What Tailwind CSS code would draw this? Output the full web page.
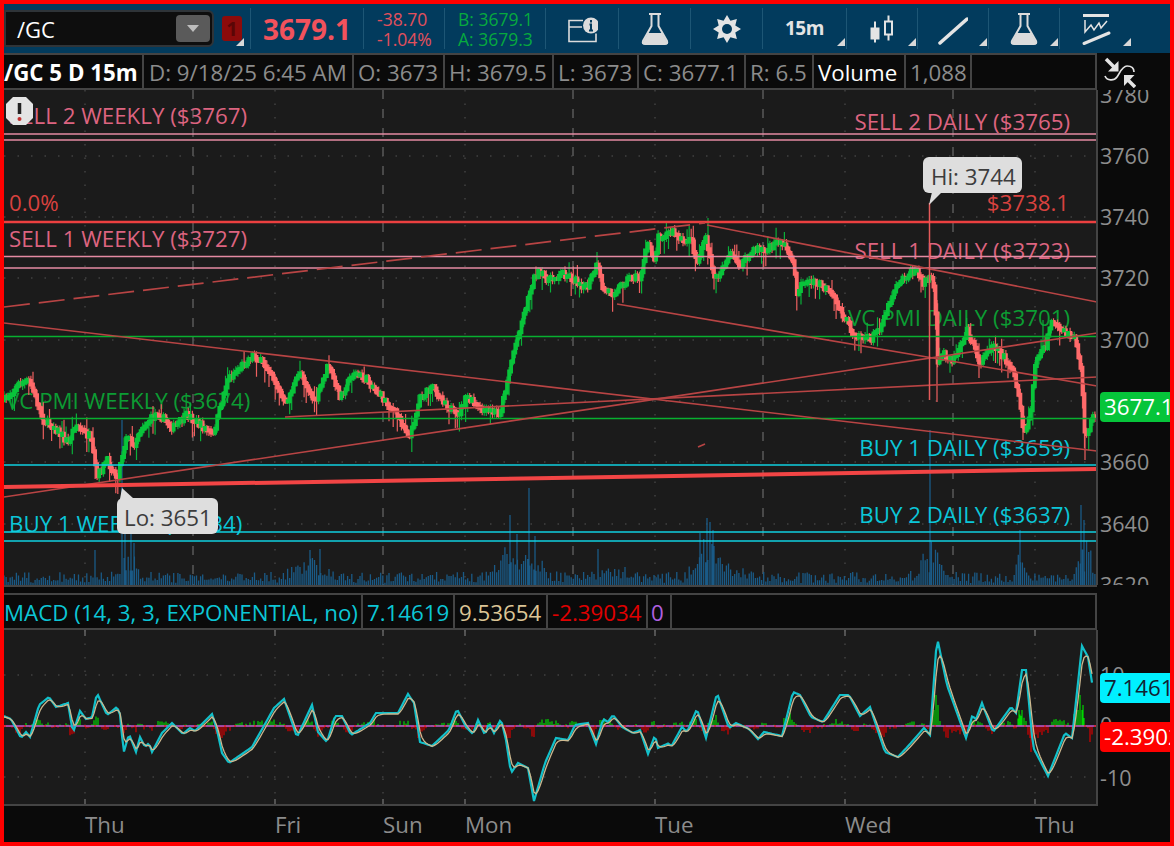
<!DOCTYPE html>
<html lang="en">

<head>
    <meta charset="UTF-8">
    <title>/GC 5 D 15m</title>
    <script src="https://cdn.jsdelivr.net/npm/@tailwindcss/browser@4"></script>
</head>

<body class="bg-[#0a0a0a]">
    <div class="w-[1174px] h-[846px] border-4 border-[#ff0000] bg-[#0a0a0a] flex flex-col overflow-hidden [font-family:'Open_Sans',sans-serif]">

        <!-- top toolbar -->
        <header class="h-[49px] shrink-0 flex bg-[#023b5d] text-[#e4e4e4]">
            <div class="w-[246px] relative flex items-center">
                <div class="w-[210px] h-[37px] flex items-center justify-between bg-[#0e0e0e] border-2 border-[#2f3438] rounded-r-md pl-[11px] pr-[2px]">
                    <span class="text-[22px] text-white pt-[2px]">/GC</span>
                    <span class="w-[34px] h-[27px] rounded-sm bg-[#5a5a5a] flex items-center justify-center">
                        <span class="w-0 h-0 border-x-[6px] border-x-transparent border-t-[7px] border-t-[#bdbdbd]"></span>
                    </span>
                </div>
                <div class="w-[20px] h-[25px] ml-[8px] rounded-[3px] bg-[#8c0b0b] text-[#5a0606] text-[20px] font-bold flex items-center justify-center">1</div>
                <span class="absolute left-[232px] top-[34px] w-0 h-0 border-l-[8px] border-l-transparent border-b-[8px] border-b-[#d8d8d8]"></span>
            </div>
            <div class="w-[113px] my-[4px] border-l border-[#1d5675] pl-[12px] flex items-center text-[28px] leading-none font-bold text-[#f2525c]">3679.1</div>
            <div class="w-[81px] my-[4px] border-l border-[#1d5675] pl-[13px] flex flex-col justify-center text-[17.500px] leading-[20px] text-[#e3505c]">
                <span>-38.70</span>
                <span>-1.04%</span>
            </div>
            <div class="w-[101px] my-[4px] border-l border-[#1d5675] pl-[13px] flex flex-col justify-center text-[17.500px] leading-[20px] text-[#07a93f]">
                <span>B: 3679.1</span>
                <span>A: 3679.3</span>
            </div>
            <div class="w-[73px] my-[4px] border-l border-[#1d5675] flex items-center justify-center">
                <svg width="32" height="30" viewBox="0 0 32 30" fill="none" stroke="#dcdcdc">
                    <path d="M17 6.500H3V27.500H30V19.500M3 13H16" stroke-width="1.600" />
                    <circle cx="25" cy="11.500" r="8" fill="#dcdcdc" stroke="none" />
                    <path d="M25 6v2.500M23.500 10.500H25V16M23 16.500h4" stroke="#023b5d" stroke-width="2" />
                </svg>
            </div>
            <div class="w-[72px] my-[4px] border-l border-[#1d5675] flex items-center justify-center">
                <svg width="28" height="34" viewBox="0 0 28 34" fill="none" stroke="#dcdcdc">
                    <path d="M8 2h12M10.500 3v11L2 29q-1 3 2 3h20q3 0 2-3L17.500 14V3" stroke-width="2" />
                    <path d="M7 21h14l6 11H1z" fill="#dcdcdc" stroke="none" />
                </svg>
            </div>
            <div class="w-[72px] my-[4px] border-l border-[#1d5675] flex items-center justify-center">
                <svg width="28" height="28" viewBox="0 0 28 28">
                    <polygon points="28,14 22.300,17.400 23.900,23.900 17.400,22.300 14,28 10.600,22.300 4.100,23.900 5.700,17.400 0,14 5.700,10.600 4.100,4.100 10.600,5.700 14,0 17.400,5.700 23.900,4.100 22.300,10.600" fill="#e4e4e4" />
                    <circle cx="14" cy="14" r="5" fill="#023b5d" />
                </svg>
            </div>
            <div class="w-[84px] my-[4px] border-l border-[#1d5675] relative flex items-center pl-[22px] text-[19px] font-bold tracking-[-0.5px]">
                15m
                <span class="absolute right-[1px] bottom-[3px] w-0 h-0 border-l-[8px] border-l-transparent border-b-[8px] border-b-[#d8d8d8]"></span>
            </div>
            <div class="w-[71px] my-[4px] border-l border-[#1d5675] relative flex items-center pl-[23px]">
                <svg width="24" height="32" viewBox="0 0 24 32" fill="none" stroke="#e4e4e4" stroke-width="2">
                    <path d="M5 8.500v21M18.500 2.500v25" />
                    <rect x="1.500" y="15.500" width="7" height="10" fill="#e4e4e4" />
                    <rect x="15" y="8.500" width="7" height="13" fill="#023b5d" />
                </svg>
                <span class="absolute right-[1px] bottom-[3px] w-0 h-0 border-l-[8px] border-l-transparent border-b-[8px] border-b-[#d8d8d8]"></span>
            </div>
            <div class="w-[71px] my-[4px] border-l border-[#1d5675] relative flex items-center pl-[20px]">
                <svg width="30" height="32" viewBox="0 0 30 32" fill="none">
                    <path d="M2 30L29 6" stroke="#e4e4e4" stroke-width="3.500" stroke-linecap="round" />
                </svg>
                <span class="absolute right-[1px] bottom-[3px] w-0 h-0 border-l-[8px] border-l-transparent border-b-[8px] border-b-[#d8d8d8]"></span>
            </div>
            <div class="w-[71px] my-[4px] border-l border-[#1d5675] relative flex items-center pl-[21px]">
                <svg width="28" height="34" viewBox="0 0 28 34" fill="none" stroke="#dcdcdc">
                    <path d="M8 2h12M10.500 3v11L2 29q-1 3 2 3h20q3 0 2-3L17.500 14V3" stroke-width="2" />
                    <path d="M7 21h14l6 11H1z" fill="#dcdcdc" stroke="none" />
                </svg>
                <span class="absolute right-[1px] bottom-[3px] w-0 h-0 border-l-[8px] border-l-transparent border-b-[8px] border-b-[#d8d8d8]"></span>
            </div>
            <div class="flex-1 my-[4px] border-l border-[#1d5675] relative flex items-center pl-[21px]">
                <svg width="30" height="34" viewBox="0 0 30 34" fill="none" stroke="#e4e4e4">
                    <path d="M2 3.500H28" stroke-width="3" />
                    <path d="M4 8V20L10 13L13 18L18 11L20 16L26 9" stroke-width="1.500" />
                    <path d="M3 31.500L28 21" stroke-width="3" stroke-linecap="round" />
                </svg>
                <span class="absolute left-[63px] bottom-[3px] w-0 h-0 border-l-[8px] border-l-transparent border-b-[8px] border-b-[#d8d8d8]"></span>
            </div>
        </header>

        <!-- study legend -->
        <div class="h-[37px] shrink-0 flex text-[22.300px] text-[#8c8c8c]">
            <div class="w-[1093px] flex border-y-2 border-[#444] border-r-2">
                <div class="w-[140px] font-bold text-white leading-[35px] border-r-2 border-[#444] whitespace-nowrap overflow-hidden">/GC 5 D 15m</div>
                <div class="w-[210px] pl-[5px] leading-[35px] border-r-2 border-[#444] whitespace-nowrap">D: 9/18/25 6:45 AM</div>
                <div class="w-[91px] pl-[4px] leading-[35px] border-r-2 border-[#444]">O: 3673</div>
                <div class="w-[109px] pl-[4px] leading-[35px] border-r-2 border-[#444]">H: 3679.5</div>
                <div class="w-[85px] pl-[4px] leading-[35px] border-r-2 border-[#444]">L: 3673</div>
                <div class="w-[107px] pl-[4px] leading-[35px] border-r-2 border-[#444]">C: 3677.1</div>
                <div class="w-[68px] pl-[4px] leading-[35px] border-r-2 border-[#444] whitespace-nowrap">R: 6.5</div>
                <div class="w-[92px] pl-[4px] leading-[35px] text-white border-r-2 border-[#444]">Volume</div>
                <div class="w-[66px] pl-[4px] leading-[35px] border-r-2 border-[#444]">1,088</div>
            </div>
            <div class="flex-1 pl-[5px] pt-[3px]">
                <svg width="34" height="32" viewBox="0 0 34 32" fill="none">
                    <path d="M4 3L14 13" stroke="#e4e4e4" stroke-width="3.500" />
                    <path d="M16.500 5V15.500H6z" fill="#e4e4e4" />
                    <path d="M33 31L24 22" stroke="#e4e4e4" stroke-width="3.500" />
                    <path d="M22 19H32.500L22 30z" fill="#e4e4e4" />
                    <path d="M3 20c2 5 9 5 12 1s5-11 10-11 7 2 7 6" stroke="#e4e4e4" stroke-width="1.700" />
                </svg>
            </div>
        </div>

        <!-- price chart -->
        <svg id="price" class="block shrink-0 text-[22.300px]" width="1166" height="495" viewBox="4 90 1166 495">
            <defs>
                <clipPath id="plot"><rect x="4" y="90" width="1093" height="495" /></clipPath>
            </defs>
            <rect x="4" y="90" width="1093" height="495" fill="#1b1b1b" />
            <g id="grid"></g>
            <g id="volume" clip-path="url(#plot)"></g>

            <g class="fill-[#dd6480]">
                <text x="9" y="124">SELL 2 WEEKLY ($3767)</text>
                <text x="9" y="247">SELL 1 WEEKLY ($3727)</text>
                <text x="1070" y="130" text-anchor="end">SELL 2 DAILY ($3765)</text>
                <text x="1070" y="259" text-anchor="end">SELL 1 DAILY ($3723)</text>
            </g>
            <g class="fill-[#d8423f]">
                <text x="9" y="211">0.0%</text>
                <text x="1069" y="211" text-anchor="end">$3738.1</text>
            </g>
            <g class="fill-[#0c9c33]">
                <text x="6" y="409">VC PMI WEEKLY ($3674)</text>
                <text x="1070" y="326" text-anchor="end">VC PMI DAILY ($3701)</text>
            </g>
            <g class="fill-[#0bc6d8]">
                <text x="9" y="532">BUY 1 WEEKLY ($3634)</text>
                <text x="1070" y="456" text-anchor="end">BUY 1 DAILY ($3659)</text>
                <text x="1070" y="523" text-anchor="end">BUY 2 DAILY ($3637)</text>
            </g>

            <g clip-path="url(#plot)" fill="none">
                <g id="candles"></g>
                <g stroke="#e58aa2" stroke-width="1.500">
                    <path d="M4 134H1097M4 140H1097M4 256.500H1097M4 268H1097" />
                </g>
                <path d="M4 222H1097" stroke="#ec4040" stroke-width="2.500" />
                <path d="M4 336.500H1097M4 418.500H1097" stroke="#08b030" stroke-width="1.500" />
                <path d="M4 465H1097M4 532H1097M4 541H1097" stroke="#10d0e0" stroke-width="1.600" />
                <g stroke="#b84444" stroke-width="1.700">
                    <path d="M4 307L705 223" stroke-dasharray="26 9" />
                    <path d="M4 323L1097 451" />
                    <path d="M4 497L1097 333" />
                    <path d="M285 417L1097 377" />
                    <path d="M617 304L1097 386" />
                    <path d="M707 225L1097 302" />
                    <path d="M698 447L705 444" />
                </g>
                <path d="M4 487L1097 469" stroke="#f24545" stroke-width="4" />
                <path d="M929.500 203V400" stroke="#e45a5a" stroke-width="1.500" />
            </g>

            <!-- axis -->
            <rect x="1097" y="90" width="73" height="495" fill="#0a0a0a" />
            <path d="M1097 90V585" stroke="#444" stroke-width="2" />
            <g class="fill-[#8e8e8e] text-[21.500px]">
                <text x="1100" y="103">3780</text>
                <text x="1100" y="164">3760</text>
                <text x="1100" y="225">3740</text>
                <text x="1100" y="286">3720</text>
                <text x="1100" y="348">3700</text>
                <text x="1100" y="470">3660</text>
                <text x="1100" y="532">3640</text>
                <text x="1100" y="593">3620</text>
            </g>
            <path d="M1100 396a4 4 0 0 1 4-4H1170V422H1104a4 4 0 0 1-4-4z" fill="#06c53a" />
            <text x="1104" y="415" class="fill-white">3677.1</text>

            <!-- hi / lo bubbles -->
            <path d="M929 205L932 192H942z" fill="#dedede" />
            <rect x="923" y="157" width="99" height="36" rx="6" fill="#dedede" />
            <text x="931" y="185" class="fill-[#3c3c3c]">Hi: 3744</text>
            <path d="M122 488L134 499H120z" fill="#dedede" />
            <rect x="117" y="498" width="101" height="36" rx="6" fill="#dedede" />
            <text x="124" y="526" class="fill-[#3c3c3c]">Lo: 3651</text>

            <!-- alert badge -->
            <path d="M13 97h13l7 7v14l-7 7H13l-7-7v-14z" fill="#e4e4e4" />
            <path d="M19.500 103v11" stroke="#222" stroke-width="3.500" />
            <circle cx="19.500" cy="119" r="2" fill="#c23030" />
        </svg>

        <div class="h-[8px] shrink-0 bg-[#0a0a0a] border-t-2 border-[#444] w-[1093px]"></div>

        <!-- MACD legend -->
        <div class="h-[37px] shrink-0 w-[1093px] flex text-[22.300px] border-y-2 border-[#444] border-r-2">
            <div class="w-[359px] leading-[35px] text-[#0cc6d6] border-r-2 border-[#444] whitespace-nowrap">MACD (14, 3, 3, EXPONENTIAL, no)</div>
            <div class="w-[92px] pl-[4px] leading-[35px] text-[#0cc6d6] border-r-2 border-[#444]">7.14619</div>
            <div class="w-[93px] pl-[4px] leading-[35px] text-[#dcc596] border-r-2 border-[#444]">9.53654</div>
            <div class="w-[100px] pl-[4px] leading-[35px] text-[#e00000] border-r-2 border-[#444] whitespace-nowrap">-2.39034</div>
            <div class="w-[24px] pl-[3px] leading-[35px] text-[#b060e0] border-r-2 border-[#444]">0</div>
        </div>

        <!-- MACD plot -->
        <svg id="macd" class="block shrink-0 text-[22.300px]" width="1166" height="176" viewBox="4 630 1166 176">
            <rect x="4" y="630" width="1093" height="176" fill="#1b1b1b" />
            <g id="macdGrid"></g>
            <g id="macdHist"></g>
            <path d="M4 726H1097" stroke="#c058d0" stroke-width="1.500" />
            <path d="M4 726H1097" stroke="#e02020" stroke-width="1.500" stroke-dasharray="2 8" />
            <path id="macdLine" fill="none" stroke="#12c0ca" stroke-width="2.200" />
            <path id="macdSignal" fill="none" stroke="#cdb88f" stroke-width="1.300" />
            <rect x="1097" y="630" width="73" height="176" fill="#0a0a0a" />
            <path d="M1097 630V806M4 805H1097" stroke="#444" stroke-width="2" />
            <g class="fill-[#8e8e8e] text-[21.500px]">
                <text x="1100" y="683">10</text>
                <text x="1100" y="733">0</text>
                <text x="1100" y="786">-10</text>
            </g>
            <path d="M1100 677a4 4 0 0 1 4-4H1170V703H1104a4 4 0 0 1-4-4z" fill="#00f0ff" />
            <text x="1104" y="696" class="fill-[#112233]">7.1461</text>
            <path d="M1100 726a4 4 0 0 1 4-4H1170V752H1104a4 4 0 0 1-4-4z" fill="#ff0000" />
            <text x="1104" y="745" class="fill-white">-2.3902</text>
        </svg>

        <!-- time axis -->
        <div class="flex-1 grid grid-cols-[81px_190px_108px_82px_190px_190px_190px_1fr] items-center pt-[2px] text-[22.300px] text-[#8c8c8c]">
            <span></span>
            <span>Thu</span>
            <span>Fri</span>
            <span>Sun</span>
            <span>Mon</span>
            <span>Tue</span>
            <span>Wed</span>
            <span>Thu</span>
        </div>
    </div>

    <script>
        // close prices, read off the chart as x,y pairs
        var closes = [4, 400, 12, 392, 20, 383, 30, 382, 43, 420, 55, 428, 68, 443, 75, 425, 90, 437, 97, 477, 107, 460, 117, 478, 127, 433, 133, 447, 140, 430, 157, 413, 173, 428, 187, 415, 213, 435, 227, 380, 253, 355, 270, 370, 285, 405, 300, 372, 315, 403, 328, 365, 340, 397, 353, 373, 367, 380, 397, 415, 410, 437, 420, 397, 433, 388, 457, 417, 467, 397, 480, 410, 500, 413, 513, 353, 533, 280, 537, 273, 550, 280, 563, 273, 587, 288, 597, 265, 603, 290, 613, 293, 630, 277, 640, 278, 648, 243, 655, 260, 658, 237, 673, 232, 683, 243, 690, 237, 697, 263, 705, 237, 715, 280, 730, 255, 740, 265, 758, 247, 765, 252, 780, 240, 792, 257, 797, 293, 803, 282, 820, 284, 833, 297, 853, 333, 870, 340, 880, 327, 897, 283, 915, 270, 923, 282, 932, 277, 935, 300, 937, 365, 943, 353, 953, 360, 967, 330, 980, 363, 993, 343, 1013, 370, 1022, 417, 1023, 437, 1030, 417, 1035, 363, 1045, 347, 1050, 323, 1067, 335, 1075, 337, 1082, 377, 1083, 417, 1085, 437, 1093, 417];

        var macdPts = [4, 716, 11, 719, 21, 738, 26, 732, 30, 737, 39, 705, 49, 697, 56, 707, 68, 703, 73, 733, 80, 711, 86, 719, 92, 717, 97, 693, 107, 715, 117, 707, 121, 717, 123, 755, 129, 734, 136, 752, 140, 737, 145, 747, 149, 743, 152, 752, 162, 733, 172, 723, 183, 734, 190, 728, 195, 731, 212, 714, 217, 730, 222, 753, 229, 763, 252, 747, 265, 724, 274, 708, 284, 699, 297, 737, 312, 705, 318, 732, 327, 742, 335, 716, 342, 716, 351, 735, 370, 723, 376, 713, 398, 713, 408, 694, 414, 703, 420, 742, 432, 746, 449, 730, 457, 709, 466, 727, 473, 734, 478, 720, 485, 735, 489, 723, 494, 733, 501, 719, 506, 740, 511, 773, 518, 763, 528, 768, 534, 801, 545, 763, 556, 738, 568, 740, 575, 725, 588, 723, 596, 744, 603, 719, 608, 722, 613, 715, 622, 727, 633, 733, 640, 730, 648, 754, 655, 735, 658, 748, 669, 743, 671, 747, 682, 727, 687, 732, 697, 709, 706, 738, 717, 693, 729, 728, 736, 723, 749, 729, 758, 739, 764, 732, 782, 736, 793, 692, 800, 695, 811, 717, 823, 722, 840, 695, 849, 695, 860, 716, 870, 707, 875, 722, 885, 752, 898, 757, 911, 743, 924, 728, 930, 735, 937, 637, 947, 685, 966, 738, 973, 713, 975, 722, 982, 703, 993, 732, 1011, 707, 1016, 713, 1022, 670, 1026, 670, 1033, 747, 1048, 776, 1065, 733, 1072, 738, 1082, 646, 1088, 657, 1093, 689];

        // volume humps: x, height, spread
        var humps = [[127, 42, 9], [310, 16, 18], [510, 30, 14], [535, 14, 14], [610, 10, 20], [707, 36, 14], [735, 10, 18], [932, 34, 12], [1020, 28, 6], [1085, 46, 6]];
        // single tall bars: x, top y
        var spikes = [[122, 420], [125, 505], [131, 520], [134, 543], [95, 550], [310, 550], [320, 549], [510, 515], [517, 534], [529, 488], [535, 536], [598, 549], [700, 533], [707, 518], [710, 522], [713, 530], [930, 430], [1020, 530], [1081, 505], [1084, 520]];

        var seed = 7;
        function rnd() {
            seed = (seed * 16807) % 2147483647;
            return (seed - 1) / 2147483646;
        }

        function interp(pts, x) {
            for (var i = 0; i < pts.length - 2; i += 2) {
                if (x <= pts[i + 2]) {
                    var t = (x - pts[i]) / (pts[i + 2] - pts[i]);
                    return pts[i + 1] + (pts[i + 3] - pts[i + 1]) * t;
                }
            }
            return pts[pts.length - 1];
        }

        // grid lines
        var grid = '';
        [85, 275, 465, 655, 845, 1035].forEach(function (x) {
            grid += '<path d="M' + x + ' 90V585" stroke="#555" stroke-dasharray="1.500 12"/>';
        });
        [193, 383, 573, 763, 953].forEach(function (x) {
            grid += '<path d="M' + x + ' 90V585" stroke="#5a5a5a" stroke-width="1.500" stroke-dasharray="9 10"/>';
        });
        [156, 217, 278, 340, 401, 462, 524].forEach(function (y) {
            grid += '<path d="M4 ' + y + 'H1097" stroke="#555" stroke-dasharray="1.500 12"/>';
        });
        document.getElementById('grid').innerHTML = grid;

        // candles
        var up = '', down = '', upWick = '', downWick = '';
        var prev = closes[1];
        for (var cx = 4; cx < 1095; cx += 2.07) {
            var close = interp(closes, cx) + (rnd() - 0.5) * 6;
            var bodyTop = Math.min(prev, close) - 2, bodyBottom = Math.max(prev, close) + 2;
            var wickUp = bodyTop - rnd() * 4 - (rnd() > 0.86 ? 8 : 0);
            var wickDown = bodyBottom + rnd() * 4 + (rnd() > 0.82 ? 11 : 0);
            var px = cx.toFixed(1);
            var body = 'M' + px + ' ' + bodyTop.toFixed(1) + 'V' + bodyBottom.toFixed(1);
            var wick = 'M' + px + ' ' + wickUp.toFixed(1) + 'V' + wickDown.toFixed(1);
            if (close < prev) {
                up += body;
                upWick += wick;
            } else {
                down += body;
                downWick += wick;
            }
            prev = close;
        }
        // the long spikes
        upWick += 'M708 218V245M597 252V270M1043 320V350';
        downWick += 'M937 300V402M1085 420V460M1023 420V440';
        document.getElementById('candles').innerHTML =
            '<path d="' + downWick + '" stroke="#ee6060" stroke-width="1.200"/>' +
            '<path d="' + upWick + '" stroke="#0ab03a" stroke-width="1.200"/>' +
            '<path d="' + down + '" stroke="#ff6a6a" stroke-width="3.800"/>' +
            '<path d="' + up + '" stroke="#08c43a" stroke-width="3.800"/>';

        // volume bars
        var vol = '';
        for (var vx = 4; vx < 1095; vx += 2.07) {
            var h = 2 + rnd() * 11;
            humps.forEach(function (hp) {
                var d = (vx - hp[0]) / hp[2];
                h += hp[1] * Math.exp(-d * d) * (0.2 + rnd());
            });
            vol += 'M' + vx.toFixed(1) + ' 585V' + (585 - h).toFixed(1);
        }
        spikes.forEach(function (s) {
            vol += 'M' + s[0] + ' 585V' + s[1];
        });
        document.getElementById('volume').innerHTML = '<path d="' + vol + '" stroke="#1a5a86" stroke-width="1.300"/>';

        // MACD
        var macdGrid = '';
        [85, 275, 383, 465, 655, 845, 1035].forEach(function (mx) {
            macdGrid += '<path d="M' + mx + ' 630V806" stroke="#555" stroke-dasharray="1.500 12"/>';
            macdGrid += '<path d="M' + mx + ' 630V636M' + mx + ' 799V805" stroke="#666" stroke-width="1.500"/>';
        });
        [675, 777].forEach(function (my) {
            macdGrid += '<path d="M4 ' + my + 'H1097" stroke="#555" stroke-dasharray="1.500 12"/>';
        });
        document.getElementById('macdGrid').innerHTML = macdGrid;

        var line = '', sig = '', hist = {green: '', red: ''}, ema = macdPts[1];
        for (var mxx = 4; mxx <= 1093; mxx += 2) {
            var v = interp(macdPts, mxx);
            ema += (v - ema) * 0.5;
            line += (line ? 'L' : 'M') + mxx + ' ' + v.toFixed(1);
            sig += (sig ? 'L' : 'M') + mxx + ' ' + (ema + 1).toFixed(1);
            var diff = (ema - v) * (0.6 + rnd() * 1.2) + (rnd() - 0.5) * 4;
            if (diff > 0) {
                hist.green += 'M' + mxx + ' 726V' + (726 - Math.min(diff, 16)).toFixed(1);
            } else {
                hist.red += 'M' + mxx + ' 726V' + (726 - Math.max(diff, -12)).toFixed(1);
            }
        }
        hist.green += 'M936 726V695M938 726V705M1019 726V710M1021 726V716M1080 726V695M1083 726V705';
        hist.red += 'M1031 726V752M1033 726V747M1090 726V742';
        document.getElementById('macdLine').setAttribute('d', line);
        document.getElementById('macdSignal').setAttribute('d', sig);
        document.getElementById('macdHist').innerHTML =
            '<path d="' + hist.green + '" stroke="#00d800" stroke-width="1.200"/>' +
            '<path d="' + hist.red + '" stroke="#d80000" stroke-width="1.200"/>';
    </script>
</body>

</html>
